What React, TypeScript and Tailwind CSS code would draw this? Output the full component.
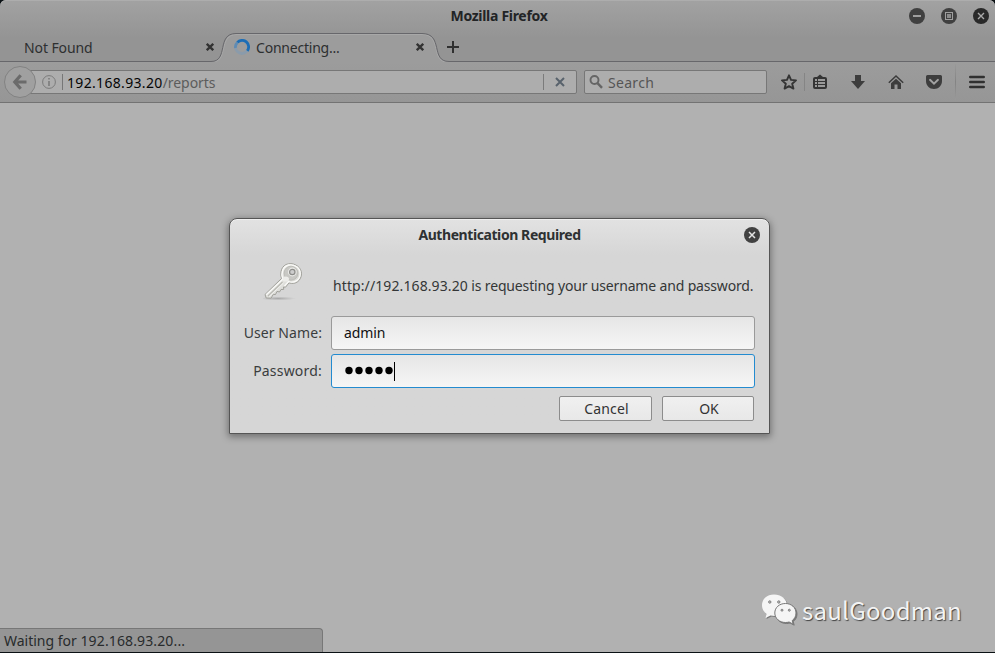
import React from "react";

function WindowButtons() {
  return (
    <div className="flex items-center gap-4">
      <svg className="block size-4" viewBox="0 0 16 16">
        <circle cx="8" cy="8" r="8" fill="#404040" />
        <path d="M4 8h8" stroke="#9f9f9f" strokeWidth="2" />
      </svg>
      <svg className="block size-4" viewBox="0 0 16 16">
        <circle cx="8" cy="8" r="8" fill="#404040" />
        <rect x="4.5" y="4.5" width="7" height="7" fill="none" stroke="#9f9f9f" />
        <rect x="6" y="6" width="4" height="4" fill="#8b8b8b" />
      </svg>
      <svg className="block size-4" viewBox="0 0 16 16">
        <circle cx="8" cy="8" r="8" fill="#292929" />
        <path d="M5 5l6 6M11 5l-6 6" stroke="#a9a9a9" strokeWidth="1.4" />
      </svg>
    </div>
  );
}

function TabClose() {
  return (
    <svg className="block h-2 w-2" viewBox="0 0 8 8">
      <path d="M.8 .8l6.400 6.400M7.200 .8L.8 7.200" stroke="#323232" strokeWidth="2.300" />
    </svg>
  );
}

function TabStrip() {
  return (
    <div className="relative flex h-[30px] items-center">
      <svg className="absolute left-0 top-0 block h-[30px] w-[995px]" viewBox="0 0 995 30">
        <path
          d="M0 29.5H211C229 29.5 216 1.5 236 1.5H422C444 1.5 430 29.5 449 29.5H995V31H0Z"
          fill="#9c9c9c"
        />
        <path
          d="M0 30.5H211C230 30.5 217 2.5 237 2.5H422C443 2.5 429 30.5 449 30.5H995"
          fill="none"
          stroke="#a8a8a8"
        />
        <path
          d="M0 29.5H211C229 29.5 216 1.5 236 1.5H422C444 1.5 430 29.5 449 29.5H995"
          fill="none"
          stroke="#67676b"
        />
      </svg>
      <div className="relative flex h-[30px] w-[226px] items-center pl-6 pr-3">
        <span className="flex-1 text-[14px] tracking-[-0.1px] text-[#2d2f30]">Not Found</span>
        <TabClose />
      </div>
      <div className="relative flex h-[30px] w-[210px] items-center pl-2 pr-3">
        <svg className="mr-[6px] block size-4" viewBox="0 0 16 16" fill="none" strokeWidth="2.800">
          <circle cx="8" cy="8" r="6.500" stroke="#8a9bab" />
          <path d="M1.500 9A6.500 6.500 0 0 1 3.400 3.400" stroke="#5f8bb3" />
          <path d="M3.400 3.400A6.500 6.500 0 0 1 13.300 11.800" stroke="#1c6db5" />
        </svg>
        <span className="flex-1 text-[14px] tracking-[-0.22px] text-[#2d2f30]">Connecting...</span>
        <TabClose />
      </div>
      <svg className="relative ml-[11px] block h-3 w-3" viewBox="0 0 12 12">
        <path d="M0 6h12M6 0v12" stroke="#303030" strokeWidth="2" />
      </svg>
    </div>
  );
}

function Toolbar() {
  return (
    <div className="flex h-[41px] items-center border-b border-[#737373] bg-linear-to-b from-[#9c9c9c] to-[#969696]">
      <div className="relative z-10 ml-1 flex size-8 items-center justify-center rounded-full border border-[#828282] bg-[#a0a0a0]">
        <svg className="block h-4 w-4" viewBox="0 0 16 16" fill="none" stroke="#6b6b6b" strokeWidth="3.2">
          <path d="M8.700 1.300L2.800 8l5.900 6.700M3 8H14.500" />
        </svg>
      </div>
      <div className="-ml-[10px] flex h-6 w-[551px] items-center rounded-r-[2px] border border-[#777] bg-[#adadad] pl-[15px]">
        <svg className="block size-[14px]" viewBox="0 0 14 14" fill="none" stroke="#7b7b7b">
          <circle cx="7" cy="7" r="6.400" />
          <path d="M7 3v1.500M7 6v5" strokeWidth="1.600" />
        </svg>
        <div className="ml-[6px] h-4 w-px bg-[#777]" />
        <span className="ml-1 flex-1 pt-px text-[14px] leading-[22px] tracking-[-0.05px] text-[#5c5c5c]">
          <span className="tracking-[0.33px] text-[#050505]">192.168.93.20</span>/reports
        </span>
        <div className="h-4 w-px bg-[#7b7b7b]" />
        <svg className="mx-[11px] block h-[10px] w-[10px]" viewBox="0 0 10 10">
          <path d="M1 1l8 8M9 1L1 9" stroke="#58626c" strokeWidth="2" />
        </svg>
      </div>
      <div className="ml-[7px] flex h-6 w-[183px] items-center rounded-[2px] border border-[#777] bg-[#adadad] pl-1">
        <svg className="block size-[15px]" viewBox="0 0 15 15" fill="none" stroke="#656565">
          <circle cx="5.500" cy="5" r="4" strokeWidth="1.900" />
          <path d="M8.500 8.200l4.500 4.600" strokeWidth="2.400" />
        </svg>
        <span className="ml-[4px] pt-px text-[14px] leading-[22px] tracking-[0.3px] text-[#555]">Search</span>
      </div>
      <svg className="ml-[14px] block size-4" viewBox="0 0 16 16">
        <path d="M8 1.300l2 4.600 5 .5-3.800 3.300 1.200 4.900L8 12.200l-4.400 2.400 1.200-4.900L1 6.400l5-.5z" fill="none" stroke="#343434" strokeWidth="1.900" strokeLinejoin="round" />
      </svg>
      <div className="ml-[7px] h-[18px] w-px bg-[#858585]" />
      <svg className="ml-2 block h-4 w-[14px]" viewBox="0 0 14 16">
        <path fillRule="evenodd" d="M4 3L7 .5 10 3h2a2 2 0 0 1 2 2v8a2 2 0 0 1-2 2H2a2 2 0 0 1-2-2V5a2 2 0 0 1 2-2zM2 5v8h10V5z" fill="#343434" />
        <path d="M2 7.500h10M2 10.500h10M4.500 5v8" stroke="#343434" strokeWidth="1" />
      </svg>
      <svg className="ml-6 block h-4 w-[14px]" viewBox="0 0 14 16">
        <path d="M4 1h6v6h4l-7 8-7-8h4z" fill="#3d3d3d" />
      </svg>
      <svg className="ml-[23px] block size-4" viewBox="0 0 16 16">
        <path d="M.8 8.800L8 2l7.200 6.800" fill="none" stroke="#3b3b3b" strokeWidth="1.500" />
        <path d="M3 9.200l5-4.500 5 4.500V15H9.500v-4.500h-3V15H3z" fill="#3d3d3d" />
      </svg>
      <svg className="ml-[22px] block size-4" viewBox="0 0 16 16">
        <path d="M1.500 1h13A1.500 1.500 0 0 1 16 2.500V7c0 4.500-3.500 8-8 8S0 11.500 0 7V2.500A1.500 1.500 0 0 1 1.500 1z" fill="#3d3d3d" />
        <path d="M4 5.800l4 3.900 4-3.900" fill="none" stroke="#a2a2a2" strokeWidth="1.900" strokeLinecap="round" />
      </svg>
      <div className="ml-[13px] h-9 w-px bg-linear-to-b from-[#999] via-[#838383] to-[#999]" />
      <svg className="ml-[13px] block h-[14px] w-4" viewBox="0 0 16 14">
        <path d="M1.300 2h13.400M1.300 7h13.400M1.300 12h13.400" stroke="#303030" strokeWidth="2.600" strokeLinecap="round" />
      </svg>
    </div>
  );
}

function KeyIcon() {
  return (
    <svg className="absolute left-[33px] top-[43px] block h-[40px] w-[42px]" viewBox="0 0 42 40">
      <defs>
        <linearGradient id="keyMetal" x1="0" y1="0" x2="1" y2="1">
          <stop offset="0" stopColor="#efefec" />
          <stop offset="1" stopColor="#d2d2cd" />
        </linearGradient>
        <radialGradient id="keyShadow">
          <stop offset="0" stopColor="#777" stopOpacity=".5" />
          <stop offset="1" stopColor="#888" stopOpacity="0" />
        </radialGradient>
      </defs>
      <ellipse cx="15" cy="36.500" rx="18" ry="2" fill="url(#keyShadow)" />
      <path
        d="M18.500 16.500C16.500 10.500 18.500 3 25.500 1.800C32 .7 38.700 5.500 38.500 11.800C38.300 18.800 32.500 23 26 20.900L22.500 25.200L20.500 25L20.700 27.400L18 27.500L16.500 30L14 29.400L12.500 32.500L10.300 32.400L8 36.200L3.200 36L2 32.500Z"
        fill="url(#keyMetal)" stroke="#a0a09a" strokeWidth="1" strokeLinejoin="round"
      />
      <path d="M3.300 32.700L19.800 17.100C17.700 11.300 19.600 4.300 25.700 3C31.700 1.800 37.200 6.200 37.200 11.800C37 17.900 31.900 21.400 25.600 19.500L21.500 24" fill="none" stroke="#fafaf8" strokeWidth="1.300" />
      <circle cx="28" cy="11.200" r="7" fill="#c8c8c4" stroke="#b8b8b2" strokeWidth=".8" />
      <circle cx="29.300" cy="10" r="4.400" fill="#e9e9e6" />
      <circle cx="29.300" cy="10" r="2.700" fill="#cdcdcd" stroke="#8d8d8a" strokeWidth="1.200" />
      <ellipse cx="22.800" cy="17" rx="3.200" ry="2.600" fill="#ededea" />
      <path d="M5 34L19.500 20" stroke="#b9b9b3" strokeWidth="1.100" />
      <path d="M6 34.700L20.500 21" stroke="#f2f2ef" />
    </svg>
  );
}

function AuthDialog() {
  return (
    <div className="absolute left-[229px] top-[218px] h-[216px] w-[541px] rounded-t-[8px] border border-[#555] bg-linear-to-b from-[#e2e2e2] via-[#d6d6d6] via-[36px] to-[#d6d6d6] shadow-[0_2px_7px_1px_rgba(0,0,0,0.36),inset_0_1px_0_#efefef]">
      <div className="flex h-8 items-center justify-center">
        <h1 className="text-[14px] font-bold leading-5 tracking-[-0.42px] text-[#2e3132]">Authentication Required</h1>
      </div>
      <svg className="absolute right-[9px] top-2 block size-4" viewBox="0 0 16 16">
        <circle cx="8" cy="8" r="8" fill="#414141" />
        <path d="M5 5l6 6M11 5l-6 6" stroke="#e4e4e4" strokeWidth="1.500" />
      </svg>
      <KeyIcon />
      <p className="ml-[103px] mt-[25px] whitespace-nowrap text-[14px] leading-5 tracking-[-0.16px] text-[#343637]">
        <span className="tracking-[0.1px]">http://192.168.93.20</span> is requesting your username and password.
      </p>
      <div className="ml-[1px] mt-5 grid grid-cols-[91px_424px] gap-x-[9px] gap-y-1 text-[14px]">
        <label className="text-right leading-[34px] tracking-[0.08px] text-[#3a3d3e]">User Name:</label>
        <div className="h-[34px] rounded-[3px] border border-[#9a9a9a] bg-linear-to-b from-[#e6e6e6] to-[#f6f6f6] pl-3 leading-8 tracking-[-0.1px] text-[#111]">admin</div>
        <label className="text-right leading-[34px] tracking-[0.2px] text-[#3a3d3e]">Password:</label>
        <div className="flex h-[34px] items-center rounded-[3px] border border-[#238bd0] bg-linear-to-b from-[#e6e6e6] to-[#f6f6f6] pl-3">
          <svg className="block h-4 w-[50px]" viewBox="0 0 50 16" fill="#000">
            {[5, 15, 25, 35, 45].map((x) => (
              <circle key={x} cx={x} cy="7.500" r="3.700" />
            ))}
          </svg>
          <div className="h-[19px] w-px bg-black" />
        </div>
      </div>
      <div className="ml-[329px] mt-2 flex gap-[10px] text-[14px] leading-[23px] text-[#333]">
        <button className="h-[25px] w-[93px] rounded-[2px] border border-[#8c8c8c] bg-linear-to-b from-[#f0f0f0] to-[#e8e8e8] pl-[2px] tracking-[0.15px]">Cancel</button>
        <button className="h-[25px] w-[92px] rounded-[2px] border border-[#8c8c8c] bg-linear-to-b from-[#f0f0f0] to-[#e8e8e8] pl-[2px]">OK</button>
      </div>
    </div>
  );
}

function Watermark() {
  return (
    <div className="absolute left-[761px] top-[593px] flex items-center">
      <svg className="block h-[34px] w-[36px] drop-shadow-[1px_1px_0_#777]" viewBox="0 0 36 34">
        <path d="M13 1.500C6 1.500 1 6 1 12.300c0 3.700 1.700 6.600 4.600 8.600L4.500 25l5-2.400c1.200.3 2.500.5 4 .5 7 0 12.500-4.700 12.500-10.800S20 1.500 13 1.500z" fill="#f5f5f5" />
        <path d="M24.500 10.500c-6.200 0-10.700 4-10.700 9.500s4.800 9.500 10.700 9.500c1.300 0 2.500-.2 3.600-.5l4.100 2.200-1-3.600c2.400-1.800 3.800-4.400 3.800-7.600 0-5.500-4.700-9.500-10.500-9.500z" fill="#f5f5f5" stroke="#777" />
        <g fill="#c8c8c8" stroke="#686868" strokeWidth=".8">
          <circle cx="8.800" cy="9" r="1.200" /><circle cx="17.800" cy="9" r="1.200" />
          <circle cx="21" cy="17.200" r="1" /><circle cx="28.300" cy="17.200" r="1" />
        </g>
      </svg>
      <span className="ml-[5px] font-['Noto_Sans_CJK_SC',sans-serif] text-[24px] leading-[34px] tracking-[0.27px] text-[#f3f3f3] [text-shadow:1px_1px_1px_#444]">saulGoodman</span>
    </div>
  );
}

export default function App() {
  return (
    <div className="relative flex h-[653px] w-[995px] flex-col overflow-hidden bg-[#0b1114] font-['Noto_Sans',sans-serif]">
      <header className="relative rounded-t-[6px] bg-linear-to-b from-[#a2a2a2] to-[#949494] to-[38px] shadow-[inset_0_1px_0_#adadad]">
        <div className="grid h-8 grid-cols-[1fr_auto_1fr] items-center pl-[9px] pr-[6px]">
          <span />
          <h1 className="text-[14px] font-bold leading-5 tracking-[-0.3px] text-[#222426]">Mozilla Firefox</h1>
          <div className="flex justify-end"><WindowButtons /></div>
        </div>
        <TabStrip />
      </header>
      <Toolbar />
      <main className="flex flex-1 items-end bg-[#b1b1b1]">
        <div className="h-6 w-[323px] rounded-tr-[4px] border-r border-t border-[#777] bg-[#959595] pl-1 text-[14px] leading-6 text-[#282b2c]">
          Waiting for <span className="tracking-[0.13px]">192.168.93.20...</span>
        </div>
      </main>
      <div className="h-px bg-[#0b1114]" />
      <AuthDialog />
      <Watermark />
    </div>
  );
}
